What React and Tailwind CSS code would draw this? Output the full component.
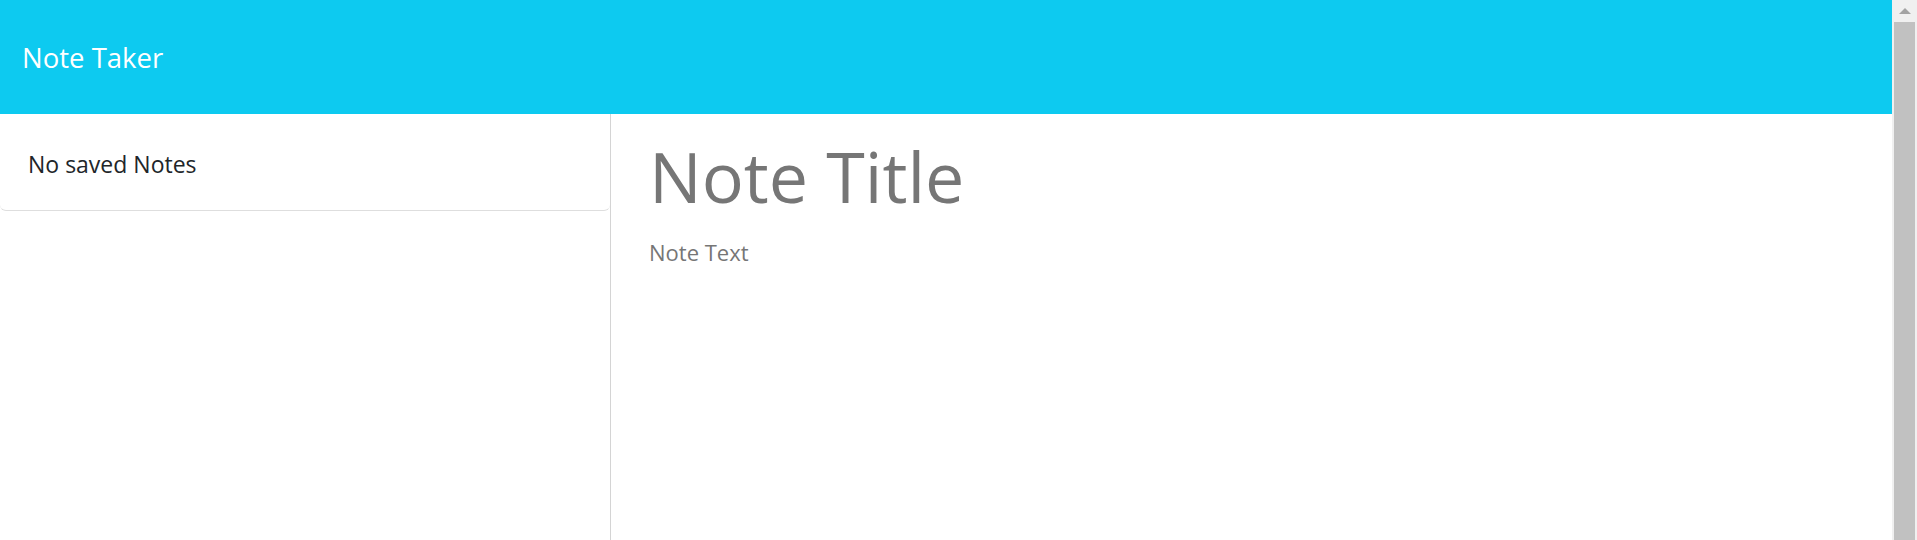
export default function App() {
  return (
    <div className="flex h-[540px] w-full overflow-hidden bg-white" style={{ fontFamily: '"Open Sans", "Noto Sans", sans-serif' }}>
      <div className="flex min-w-0 flex-1 flex-col">
        <header className="flex h-[114px] shrink-0 items-center bg-[#0dcaf0] pl-[22px]">
          <span className="pt-[2px] text-[27.5px] text-white">Note Taker</span>
        </header>

        <div className="flex flex-1">
          <aside className="w-[611px] shrink-0 border-r border-[#d4d4d4]">
            <div className="flex h-[97px] items-center rounded-b-md border-b border-[#dedede] pl-[28px] pt-[4px]">
              <span className="text-[23px] text-[#212529]">No saved Notes</span>
            </div>
          </aside>

          <main className="flex-1 pl-[38px] pt-[17px]">
            <h1 className="text-[70px] leading-[1.3] text-[#767676]">Note Title</h1>
            <p className="mt-[14px] text-[22px] text-[#767676]">Note Text</p>
          </main>
        </div>
      </div>

      {/* scrollbar */}
      <div className="flex w-[25px] shrink-0 flex-col bg-[#f0f0f0]">
        <div className="flex h-[22px] items-center justify-center">
          <div className="h-0 w-0 border-x-[6px] border-b-[6px] border-x-transparent border-b-[#a3a3a3]" />
        </div>
        <div className="mx-[2px] flex-1 bg-[#c1c1c1]" />
      </div>
    </div>
  );
}
